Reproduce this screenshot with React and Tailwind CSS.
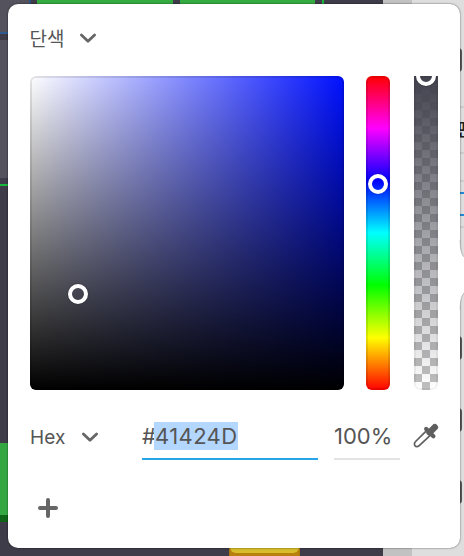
import React from "react";

function Chevron() {
  return (
    <svg width="18" height="12" viewBox="0 0 18 12" fill="none" stroke="#666" strokeWidth="2.8" strokeLinecap="round" strokeLinejoin="round">
      <path d="M2.400 2.900 9 9.200l6.600-6.300" />
    </svg>
  );
}

function Eyedropper() {
  return (
    <svg className="shrink-0" width="26" height="26" viewBox="0 0 26 26" fill="none" stroke="#5e5e5e" strokeLinecap="round">
      <path d="M12.300 8.800 2.600 18.500c-1.400 1.400-1.500 3.400-.5 4.400s3 .9 4.400-.5L16.700 12.800" strokeWidth="1.700" />
      <path d="M13.200 6l7.200 7.200" strokeWidth="4.200" />
      <path d="M16.600 9.400l5.200-5.200" strokeWidth="6.400" />
    </svg>
  );
}

function Knob({ className }) {
  return <span className={`absolute size-5 rounded-full border-4 border-white shadow-[0_0_2px_rgba(0,0,0,0.4)] ${className}`} />;
}

function Canvas() {
  return (
    <div className="flex w-[383px] shrink-0 bg-[#3d3c48]">
      <div className="flex w-[31px] flex-col">
        <div className="h-8 border-r-2 border-[#30527f] bg-[#53525d]" />
        <div className="h-0.5 bg-[#305b90]" />
        <div className="mt-1.5 h-[138px] bg-[#53525d]" />
        <div className="mt-1.5 h-0.5 bg-[#18b83c]" />
        <div className="mt-[257px] h-[79px] border-b-[7px] border-[#0e6518] bg-[#35a844]" />
      </div>
      <div className="flex grow flex-col justify-between pl-1.5">
        <div className="flex h-8 gap-[7px]">
          <div className="w-[136px] bg-[#35ac42]" />
          <div className="w-[135px] bg-[#35ac42]" />
          <div className="w-0.5 bg-[#18b83c]" />
        </div>
        <div className="ml-[192px] h-[21px] w-[71px] border-x border-[#a8750e] bg-[#b8800e]">
          <div className="h-[18px] rounded-b-md bg-[#d8bd2d]" />
        </div>
      </div>
    </div>
  );
}

function Handle() {
  return <div className="h-6 w-1.5 shrink-0 rounded-r-sm bg-[#555]" />;
}

function Inspector() {
  return (
    <div className="flex w-[81px] shrink-0 flex-col bg-[#c2c2c2]">
      <div className="ml-[29px] flex h-[556px] flex-col bg-[#dedede] pl-11 pt-12">
        <Handle />
        <div className="mt-[34px] h-0.5 shrink-0 bg-[#cdcdcd]" />
        <div className="h-11 shrink-0 pt-[9px] font-['Noto_Sans_CJK_KR',sans-serif] text-[18px] font-medium leading-[22px] text-[#222]">편</div>
        <div className="h-0.5 shrink-0 bg-[#cdcdcd]" />
        <div className="mt-[26px] h-0.5 shrink-0 bg-[#cdcdcd]" />
        <div className="mt-2.5 h-6 shrink-0 border-y-2 border-[#2388d6]" />
        <div className="mt-2.5 h-0.5 shrink-0 bg-[#cdcdcd]" />
        <div className="mt-[108px] flex flex-col gap-12">
          <Handle />
          <Handle />
          <Handle />
        </div>
      </div>
    </div>
  );
}

export default function App() {
  return (
    <div className="relative flex h-[556px] w-[464px] overflow-hidden font-['Inter','Noto_Sans_CJK_KR',sans-serif] text-[#555]">
      <Canvas />
      <Inspector />
      <main className="absolute left-2 top-1 flex h-[544px] w-[452px] flex-col rounded-[10px] bg-white px-[22px] shadow-[0_0_2px_rgba(0,0,0,0.65)]">
        <button className="flex h-[72px] items-center gap-[14px] pb-1">
          <span className="-ml-px w-9 whitespace-nowrap font-['Noto_Sans_CJK_KR',sans-serif] text-[19px] leading-6">단색</span>
          <Chevron />
        </button>

        <div className="flex h-[314px] shrink-0">
          <div className="relative w-[314px] overflow-hidden rounded-md bg-[linear-gradient(to_top,#000,transparent),linear-gradient(to_right,#fff,#0010ff)]">
            <div className="h-full rounded-md border-2 border-black/10" />
            <Knob className="left-[38px] top-[208px]" />
          </div>
          <div className="relative ml-[22px] w-6 overflow-hidden rounded-md bg-[linear-gradient(to_bottom,#f00,#f0f_16.67%,#00f_33.33%,#0ff_50%,#0f0_66.67%,#ff0_83.33%,#f00)]">
            <div className="h-full rounded-md border-2 border-black/10" />
            <Knob className="left-0.5 top-[98px]" />
          </div>
          <div className="relative ml-6 w-6 overflow-hidden rounded-b-md bg-[linear-gradient(to_bottom,#41424d,#41424d00),conic-gradient(#bfbfbf_25%,#fff_0_50%,#bfbfbf_0_75%,#fff_0)] bg-[length:100%_100%,16px_16px] bg-[position:0_0,0_2px]">
            <div className="h-full rounded-md border-2 border-black/5" />
            <Knob className="left-0.5 -top-2.5" />
          </div>
        </div>

        <div className="mt-[30px] flex h-10 shrink-0">
          <button className="flex h-[34px] w-28 shrink-0 items-center gap-[14px] text-[19px] leading-6">
            <span className="w-[37px] pt-px text-left tracking-[0.1px]">Hex</span>
            <Chevron />
          </button>
          <div className="flex w-44 shrink-0 items-start border-b-2 border-[#25a4e7] pt-0.5 text-[22px] leading-7">
            <span className="w-3 whitespace-nowrap tracking-[-1.5px]">#</span>
            <span className="w-[84px] whitespace-nowrap bg-[#b4d7ff] pl-px tracking-[0.4px]">41424D</span>
          </div>
          <div className="ml-4 w-[66px] shrink-0 border-b-2 border-[#e3e3e3] pt-0.5 text-[22px] leading-7">100%</div>
          <div className="ml-[13px] flex w-[25px] shrink-0 items-start pt-[3px]">
            <Eyedropper />
          </div>
        </div>

        <button className="ml-2 mt-[38px] flex size-5 items-center justify-center">
          <svg width="20" height="20" viewBox="0 0 20 20" stroke="#666" strokeWidth="4" strokeLinecap="round">
            <path d="M10 2v16M2 10h16" />
          </svg>
        </button>
      </main>
      <svg className="absolute left-[459px] top-[240px]" width="5" height="70" viewBox="0 0 5 70">
        <path d="M0 0h1C1 8 2 14 5 17v36C2 56 1 62 1 70H0z" fill="#fff" />
        <path d="M1.200 0C1.200 8 2.200 14 5.200 17M5.200 53C2.200 56 1.200 62 1.200 70" fill="none" stroke="#aaa" strokeWidth=".8" />
      </svg>
    </div>
  );
}
